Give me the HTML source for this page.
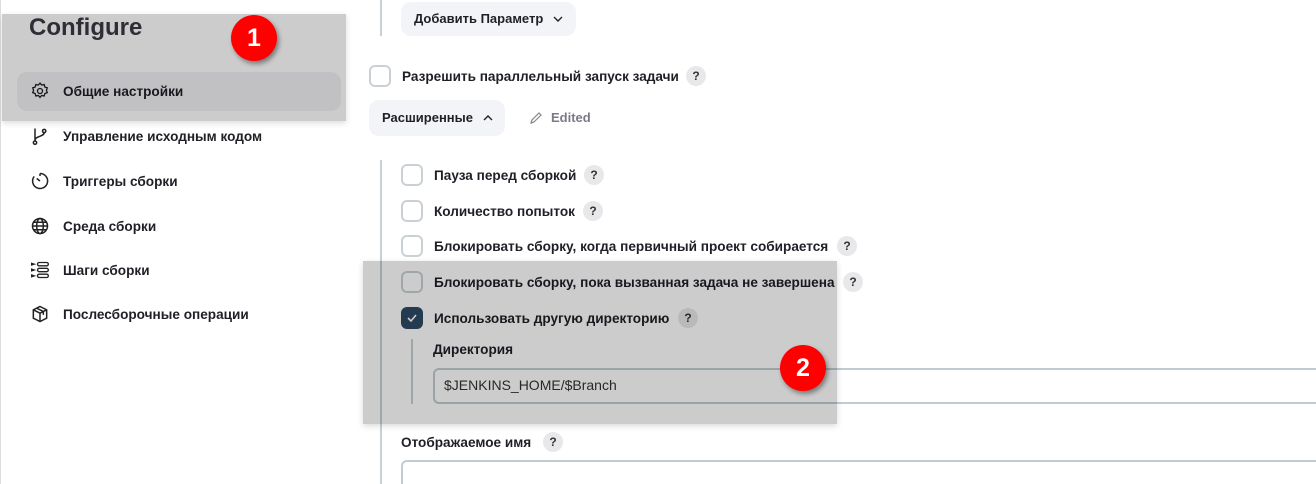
<!DOCTYPE html>
<html><head><meta charset="utf-8"><style>
*{box-sizing:border-box;margin:0;padding:0}
html,body{width:1316px;height:484px;overflow:hidden}
body{background:#fff;font-family:"Liberation Sans","DejaVu Sans",sans-serif;color:#1f1f26;position:relative}
.a{position:absolute}
.side{font-size:14.3px;font-weight:600;color:#1f1f26}
.ico{position:absolute;left:30px;width:20px;height:20px}
.t{position:absolute;font-size:13.6px;font-weight:600;white-space:nowrap;line-height:18px}
.cb{position:absolute;width:22px;height:22px;border:2px solid #c9d1d5;border-radius:6px;background:#fff}
.q{position:absolute;width:20px;height:20px;border-radius:50%;background:#e8e8eb;font-size:12px;font-weight:700;text-align:center;line-height:20px;color:#333}
.btn{position:absolute;background:#f3f4f7;border-radius:10px;font-size:13px;font-weight:600;line-height:34px;padding-left:13px}
.vl{position:absolute;width:2px;background:#c9d1d5}
.inp{position:absolute;border:2px solid #c2ccd0;border-radius:6px;background:#fff}
.ov{position:absolute;background:rgba(0,0,0,0.2);box-shadow:0 2px 6px rgba(0,0,0,.15)}
.badge{position:absolute;width:46px;height:46px;border-radius:50%;background:#f00;color:#fff;font-weight:700;font-size:25px;text-align:center;line-height:46px;box-shadow:2px 3px 5px rgba(0,0,0,.4)}
</style></head><body>
<div class="vl" style="left:0;top:0;height:484px;width:1px;background:#ddd"></div>
<div class="a" style="left:29px;top:14px;font-size:24px;font-weight:700;color:#3a3a44">Configure</div>
<div class="a" style="left:17px;top:72px;width:324px;height:39px;background:#f2f2f5;border-radius:10px"></div>
<svg class="ico" style="top:81px" viewBox="0 0 24 24" fill="none" stroke="#222" stroke-width="1.6"><circle cx="12" cy="12" r="3"/><path d="M12 2.5l2 2.3 3-.6.8 3 2.9 1-1 2.9 1 2.9-2.9 1-.8 3-3-.6-2 2.3-2-2.3-3 .6-.8-3-2.9-1 1-2.9-1-2.9 2.9-1 .8-3 3 .6z"/></svg>
<div class="t side" style="left:63px;top:83px">Общие настройки</div>
<svg class="ico" style="top:126px" viewBox="0 0 24 24" fill="none" stroke="#222" stroke-width="1.8"><circle cx="6" cy="20" r="2"/><circle cx="17" cy="6" r="2"/><path d="M6 3v15M17 8c0 5-11 4-11 9"/></svg>
<div class="t side" style="left:63px;top:128px">Управление исходным кодом</div>
<svg class="ico" style="top:171px" viewBox="0 0 24 24" fill="none" stroke="#222" stroke-width="1.8"><path d="M12 3a9 9 0 1 1-7 3.5"/><path d="M12 3v3M8 9l4 3"/></svg>
<div class="t side" style="left:63px;top:173px">Триггеры сборки</div>
<svg class="ico" style="top:216px" viewBox="0 0 24 24" fill="none" stroke="#222" stroke-width="1.8"><circle cx="12" cy="12" r="9"/><ellipse cx="12" cy="12" rx="4" ry="9"/><path d="M3 12h18M4.5 7.5h15M4.5 16.5h15"/></svg>
<div class="t side" style="left:63px;top:218px">Среда сборки</div>
<svg class="ico" style="top:260px" viewBox="0 0 24 24" fill="none" stroke="#222" stroke-width="1.6"><rect x="9" y="3" width="13" height="4" rx="2"/><rect x="9" y="10" width="13" height="4" rx="2"/><rect x="9" y="17" width="13" height="4" rx="2"/><path d="M2 4l3 1-3 1zM2 11l3 1-3 1zM2 18l3 1-3 1z"/></svg>
<div class="t side" style="left:63px;top:262px">Шаги сборки</div>
<svg class="ico" style="top:304px" viewBox="0 0 24 24" fill="none" stroke="#222" stroke-width="1.8"><path d="M12 3l8 4v10l-8 4-8-4V7z"/><path d="M4 7l8 4 8-4M12 11v10M8 5l8 4v4"/></svg>
<div class="t side" style="left:63px;top:306px">Послесборочные операции</div>

<div class="vl" style="left:380px;top:0;height:36px"></div>
<div class="btn" style="left:401px;top:2px;width:175px">Добавить Параметр <svg width="10" height="8" viewBox="0 0 10 8" style="margin-left:6px" fill="none" stroke="#222" stroke-width="1.4"><path d="M1 2l4 4 4-4"/></svg></div>
<div class="cb" style="left:369px;top:65px"></div>
<div class="t" style="left:402px;top:68px">Разрешить параллельный запуск задачи</div>
<div class="q" style="left:686px;top:66px">?</div>
<div class="btn" style="left:369px;top:100px;width:136px;height:36px;line-height:36px">Расширенные <svg width="10" height="8" viewBox="0 0 10 8" style="margin-left:6px" fill="none" stroke="#222" stroke-width="1.4"><path d="M1 6l4-4 4 4"/></svg></div>
<svg class="a" style="left:529px;top:111px" width="14" height="14" viewBox="0 0 14 14" fill="none" stroke="#888" stroke-width="1.2"><path d="M2 12l1-3 7-7 2 2-7 7z"/></svg>
<div class="a" style="left:551px;top:110px;font-size:13px;font-weight:600;color:#7a7a88">Edited</div>

<div class="vl" style="left:380px;top:160px;height:324px"></div>
<div class="cb" style="left:401px;top:164px"></div><div class="t" style="left:434px;top:167px">Пауза перед сборкой</div><div class="q" style="left:584px;top:165px">?</div>
<div class="cb" style="left:401px;top:200px"></div><div class="t" style="left:434px;top:203px">Количество попыток</div><div class="q" style="left:583px;top:201px">?</div>
<div class="cb" style="left:401px;top:235px"></div><div class="t" style="left:434px;top:238px">Блокировать сборку, когда первичный проект собирается</div><div class="q" style="left:837px;top:236px">?</div>
<div class="cb" style="left:401px;top:271px"></div><div class="t" style="left:434px;top:274px">Блокировать сборку, пока вызванная задача не завершена</div><div class="q" style="left:843px;top:272px">?</div>
<div class="cb" style="left:401px;top:307px;background:#2e4a63;border-color:#2e4a63"><svg width="18" height="18" viewBox="0 0 18 18" fill="none" stroke="#fff" stroke-width="1.6"><path d="M5 9l3 3 5-6"/></svg></div>
<div class="t" style="left:434px;top:310px">Использовать другую директорию</div><div class="q" style="left:678px;top:308px">?</div>
<div class="vl" style="left:411px;top:339px;height:65px"></div>
<div class="t" style="left:433px;top:341px">Директория</div>
<div class="inp" style="left:433px;top:368px;width:900px;height:36px"></div>
<div class="a" style="left:444px;top:377px;font-size:14px;color:#333">$JENKINS_HOME/$Branch</div>
<div class="t" style="left:401px;top:434px">Отображаемое имя</div><div class="q" style="left:543px;top:432px">?</div>
<div class="inp" style="left:401px;top:460px;width:930px;height:30px;border-bottom:none;border-radius:6px 6px 0 0"></div>

<div class="ov" style="left:2px;top:14px;width:344px;height:107px"></div>
<div class="ov" style="left:363px;top:261px;width:474px;height:163px"></div>
<div class="badge" style="left:231px;top:15px">1</div>
<div class="badge" style="left:780px;top:345px">2</div>
</body></html>
